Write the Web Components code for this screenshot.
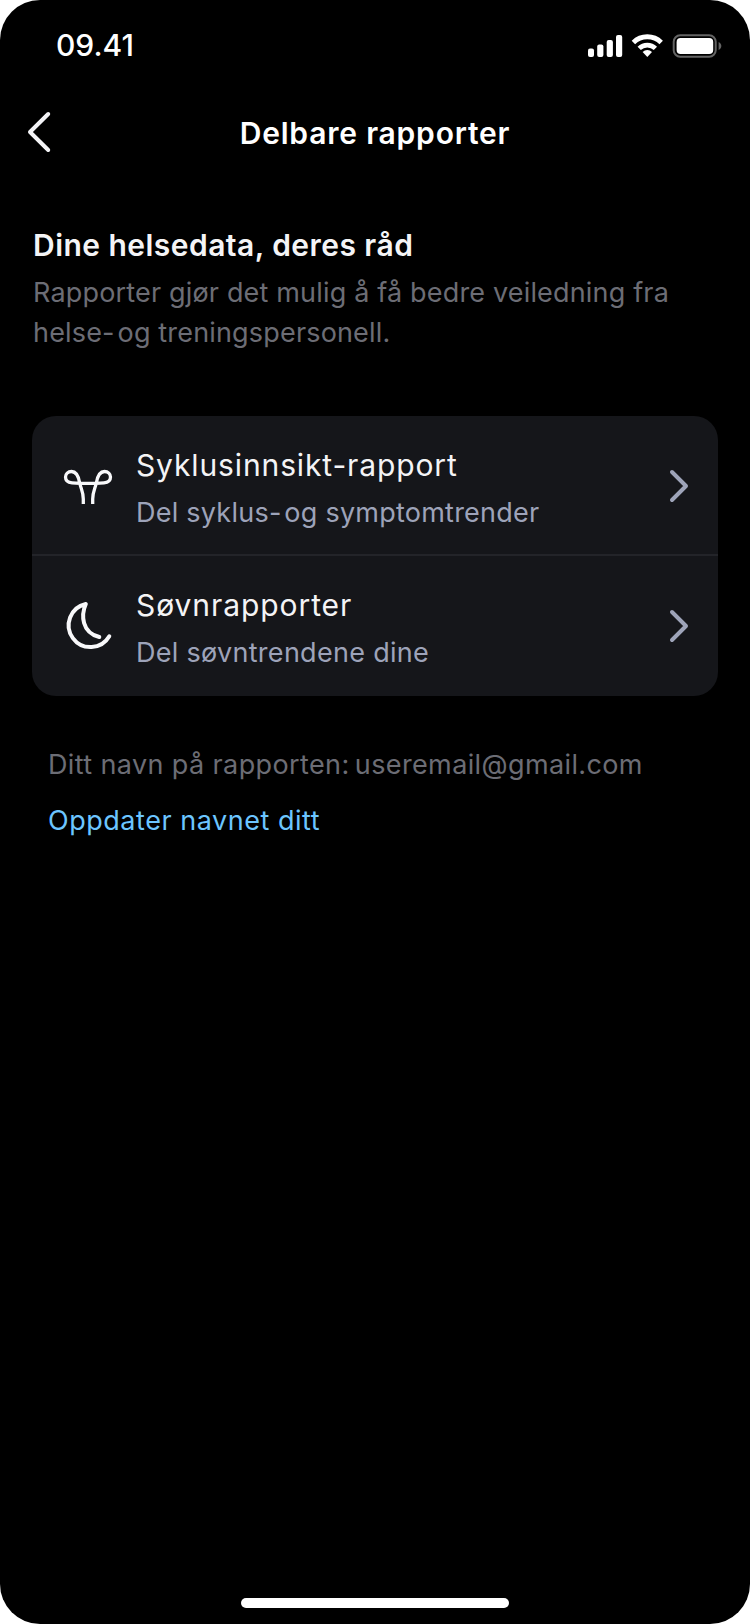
<!DOCTYPE html>
<html lang="nb">
<head>
<meta charset="utf-8">
<title>Delbare rapporter</title>
<style>
    body {
        margin: 0;
        background: #fff;
        font-family: Inter, "Liberation Sans", sans-serif;
    }

    /* punctuation followed by a narrow space */
    .tight {
        letter-spacing: -2.3px;
    }

    .tight.colon {
        letter-spacing: -1px;
    }
</style>
</head>
<body>
<phone-screen>
    <status-bar slot="top" time="09.41"></status-bar>
    <nav-header slot="top">Delbare rapporter</nav-header>

    <section-intro>
        <span slot="title">Dine helsedata, deres råd</span>
        Rapporter gjør det mulig å få bedre veiledning fra<br>helse<span class="tight">- </span>og treningspersonell.
    </section-intro>

    <report-list>
        <report-row icon="cycle" style="--title-spacing: 0.875px; --sub-spacing: 0.24px">
            Syklusinnsikt-rapport
            <span slot="sub">Del syklus<span class="tight">- </span>og symptomtrender</span>
        </report-row>
        <report-row icon="moon" style="--title-spacing: 0.93px; --sub-spacing: 0.29px">
            Søvnrapporter
            <span slot="sub">Del søvntrendene dine</span>
        </report-row>
    </report-list>

    <report-name>
        Ditt navn på rapporten<span class="tight colon">: </span>useremail@gmail.com
        <span slot="action">Oppdater navnet ditt</span>
    </report-name>
</phone-screen>

<script>
class PhoneScreen extends HTMLElement {
    constructor() {
        super();
        this.attachShadow({ mode: 'open' });
    }

    connectedCallback() {
        this.shadowRoot.innerHTML = `
            <style>
                :host {
                    display: flex;
                    flex-direction: column;
                    width: 750px;
                    height: 1624px;
                    box-sizing: border-box;
                    border-radius: 40px;
                    background: #000;
                    overflow: hidden;
                }

                main {
                    padding: 49px 32px 0;
                }

                .home {
                    width: 268px;
                    height: 10px;
                    margin: auto auto 16px;
                    border-radius: 5px;
                    background: #fff;
                }
            </style>
            <slot name="top"></slot>
            <main><slot></slot></main>
            <div class="home"></div>
        `;
    }
}
customElements.define('phone-screen', PhoneScreen);

class StatusBar extends HTMLElement {
    constructor() {
        super();
        this.attachShadow({ mode: 'open' });
    }

    connectedCallback() {
        const time = this.getAttribute('time') || '';

        this.shadowRoot.innerHTML = `
            <style>
                :host {
                    display: flex;
                    align-items: center;
                    justify-content: space-between;
                    height: 90px;
                    padding: 0 28px 0 56px;
                    color: #fff;
                }

                .time {
                    font-size: 30px;
                    font-weight: 550;
                    line-height: 40px;
                    letter-spacing: 0;
                }

                svg {
                    display: block;
                    margin-top: 2px;
                }
            </style>
            <span class="time">${time}</span>
            <svg width="134" height="24" viewBox="0 0 134 24" fill="#fff">
                <!-- signal -->
                <rect x="0" y="14.5" width="6" height="8.5" rx="2"/>
                <rect x="9.2" y="10.5" width="6.2" height="12.5" rx="2"/>
                <rect x="18.7" y="6" width="6.2" height="17" rx="2"/>
                <rect x="28" y="1" width="6.2" height="22" rx="2"/>
                <!-- wifi -->
                <g fill="none" stroke="#fff">
                    <path stroke-width="4.9" d="M45.4 8.4A20 20 0 0 1 73.2 8.4"/>
                    <path stroke-width="4.7" d="M51.2 14.4A11.7 11.7 0 0 1 67.4 14.4"/>
                </g>
                <path d="M54.6 17.9A6.8 6.8 0 0 1 64 17.9L59.3 23Z"/>
                <!-- battery -->
                <rect x="85.7" y="1.3" width="42" height="21.4" rx="6.5" fill="none" stroke="#646464" stroke-width="2"/>
                <rect x="88.6" y="4" width="36.6" height="16" rx="4"/>
                <path fill="#646464" d="M130.6 8C134.2 9.5 134.2 14.5 130.6 16Z"/>
            </svg>
        `;
    }
}
customElements.define('status-bar', StatusBar);

class NavHeader extends HTMLElement {
    constructor() {
        super();
        this.attachShadow({ mode: 'open' });
    }

    connectedCallback() {
        this.shadowRoot.innerHTML = `
            <style>
                :host {
                    display: grid;
                    grid-template-columns: 72px 1fr 72px;
                    align-items: center;
                    height: 86px;
                    color: #fff;
                }

                svg {
                    display: block;
                    margin: 0 0 2px 24px;
                }

                h1 {
                    margin: 0;
                    text-align: center;
                    font-size: 30px;
                    font-weight: 600;
                    line-height: 40px;
                    letter-spacing: 0.8px;
                }
            </style>
            <svg width="30" height="48" viewBox="0 0 30 48" fill="none" stroke="#f3f3f6" stroke-width="4" stroke-linecap="round" stroke-linejoin="round">
                <path d="M24.2 6L6 24L24.2 42"/>
            </svg>
            <h1><slot></slot></h1>
        `;
    }
}
customElements.define('nav-header', NavHeader);

class SectionIntro extends HTMLElement {
    constructor() {
        super();
        this.attachShadow({ mode: 'open' });
    }

    connectedCallback() {
        this.shadowRoot.innerHTML = `
            <style>
                :host {
                    display: block;
                    padding-left: 1px;
                }

                h2 {
                    margin: 0 0 8px;
                    color: #f4f4f6;
                    font-size: 30px;
                    font-weight: 600;
                    line-height: 40px;
                    letter-spacing: 0.46px;
                }

                p {
                    margin: 0;
                    color: #6c6d75;
                    font-size: 27px;
                    line-height: 40px;
                    letter-spacing: 0.17px;
                    white-space: nowrap;
                }
            </style>
            <h2><slot name="title"></slot></h2>
            <p><slot></slot></p>
        `;
    }
}
customElements.define('section-intro', SectionIntro);

class ReportList extends HTMLElement {
    constructor() {
        super();
        this.attachShadow({ mode: 'open' });
    }

    connectedCallback() {
        this.shadowRoot.innerHTML = `
            <style>
                :host {
                    display: block;
                    margin-top: 63px;
                    border-radius: 24px;
                    background: #15161a;
                    overflow: hidden;
                }

                ::slotted(report-row:not(:last-child)) {
                    border-bottom: 2px solid #232429;
                }
            </style>
            <slot></slot>
        `;
    }
}
customElements.define('report-list', ReportList);

const ICONS = {
    cycle: `<path stroke-width="3.3" stroke-linecap="butt" d="M19.3 42V37C19.3 30 17 27 15.7 21C14.5 14 12.5 9.5 7.5 9.5C4 9.5 1.5 12 1.5 15C1.5 18.5 4 20.5 8 20.8C18 21.6 30 21.6 40 20.8C44 20.5 46.5 18.5 46.5 15C46.5 12 44 9.5 40.5 9.5C35.5 9.5 33.5 14 32.3 21C31 27 28.7 30 28.7 37V42"/>`,
    moon: `<path stroke-width="4" d="M45.3 34.3A21.8 21.8 0 1 1 21.8 2C17 13 17.5 30.5 35.3 35"/>`
};

class ReportRow extends HTMLElement {
    constructor() {
        super();
        this.attachShadow({ mode: 'open' });
    }

    connectedCallback() {
        const icon = ICONS[this.getAttribute('icon')] || '';

        this.shadowRoot.innerHTML = `
            <style>
                :host {
                    display: grid;
                    grid-template-columns: 48px 1fr 20px;
                    column-gap: 24px;
                    height: 140px;
                    padding: 0 29px 0 32px;
                    box-sizing: border-box;
                }

                svg {
                    display: block;
                    overflow: visible;
                    fill: none;
                    stroke-linecap: round;
                    stroke-linejoin: round;
                }

                .icon {
                    margin-top: 46px;
                    stroke: #f8f8fa;
                }

                .chevron {
                    margin-top: 54px;
                    stroke: #9ea4b9;
                    stroke-width: 4;
                }

                .text {
                    padding-top: 26px;
                    white-space: nowrap;
                }

                .title {
                    color: #f4f4f6;
                    font-size: 30px;
                    line-height: 46px;
                    letter-spacing: var(--title-spacing);
                }

                .sub {
                    color: #9da3b9;
                    font-size: 27px;
                    line-height: 50px;
                    letter-spacing: var(--sub-spacing);
                }
            </style>
            <svg class="icon" width="48" height="48" viewBox="0 0 48 48">${icon}</svg>
            <div class="text">
                <div class="title"><slot></slot></div>
                <div class="sub"><slot name="sub"></slot></div>
            </div>
            <svg class="chevron" width="20" height="32" viewBox="0 0 20 32"><path d="M3 2L17 16L3 30"/></svg>
        `;
    }
}
customElements.define('report-row', ReportRow);

class ReportName extends HTMLElement {
    constructor() {
        super();
        this.attachShadow({ mode: 'open' });
    }

    connectedCallback() {
        this.shadowRoot.innerHTML = `
            <style>
                :host {
                    display: flex;
                    flex-direction: column;
                    gap: 16px;
                    padding: 49px 16px 0;
                    font-size: 27px;
                    line-height: 40px;
                }

                .name {
                    color: #6c6d75;
                    letter-spacing: 0.38px;
                }

                .action {
                    color: #6cc5ff;
                    letter-spacing: 0.53px;
                }
            </style>
            <div class="name"><slot></slot></div>
            <div class="action"><slot name="action"></slot></div>
        `;
    }
}
customElements.define('report-name', ReportName);
</script>
</body>
</html>
